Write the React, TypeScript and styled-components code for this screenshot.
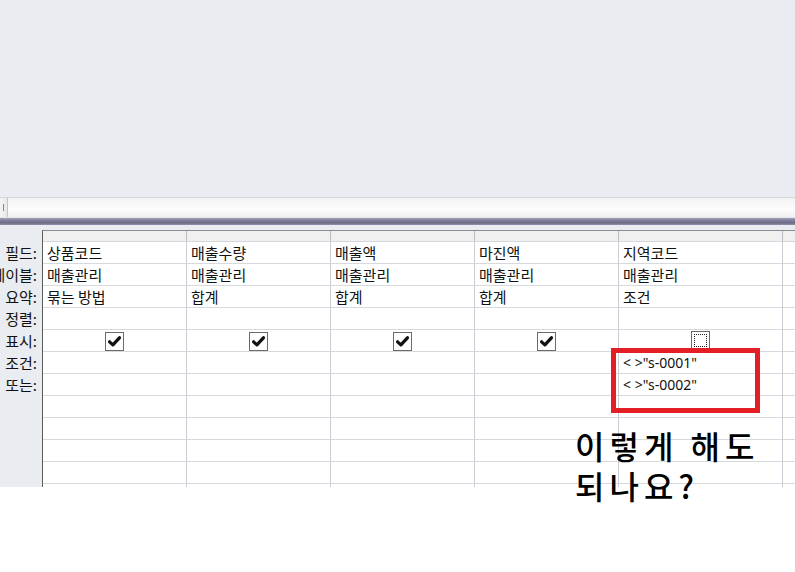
import styled, { createGlobalStyle } from 'styled-components';

const GlobalStyle = createGlobalStyle`
  html, body {
    margin: 0;
    padding: 0;
    background: #ffffff;
  }
  body {
    font-family: 'Noto Sans CJK KR', 'Noto Sans', sans-serif;
  }
`;

interface ColumnData {
  field: string;
  table: string;
  total: string;
  show: boolean;
  focused?: boolean;
  criteria?: string[];
}

const columns: Array<ColumnData> = [
  { field: '상품코드', table: '매출관리', total: '묶는 방법', show: true },
  { field: '매출수량', table: '매출관리', total: '합계', show: true },
  { field: '매출액', table: '매출관리', total: '합계', show: true },
  { field: '마진액', table: '매출관리', total: '합계', show: true },
  {
    field: '지역코드',
    table: '매출관리',
    total: '조건',
    show: false,
    focused: true,
    criteria: ['< >"s-0001"', '< >"s-0002"'],
  },
];

const rowLabels = ['필드:', '테이블:', '요약:', '정렬:', '표시:', '조건:', '또는:'];
const ROW_COUNT = 12;

function CheckMark() {
  return (
    <svg width="13" height="11" viewBox="0 0 13 11">
      <path d="M1.6 5.8 L4.9 8.9 L11.4 1.8" fill="none" stroke="#111" strokeWidth="3.2" strokeLinecap="round" strokeLinejoin="round" />
    </svg>
  );
}

const cellText = (col: ColumnData, row: number) => {
  if (row === 0) return col.field;
  if (row === 1) return col.table;
  if (row === 2) return col.total;
  if (row === 5) return col.criteria?.[0] ?? '';
  if (row === 6) return col.criteria?.[1] ?? '';
  return '';
};

export default function App() {
  return (
    <>
      <GlobalStyle />
      <Page>
        <TopPane />
        <ScrollRow>
          <ScrollButton />
        </ScrollRow>
        <Splitter />
        <DesignArea>
          <LabelColumn>
            {rowLabels.map((label) => (
              <LabelCell key={label}>{label}</LabelCell>
            ))}
          </LabelColumn>
          <Grid>
            {columns.map((col) => (
              <HeaderCell key={`h-${col.field}`} />
            ))}
            <HeaderCell $last />
            {Array.from({ length: ROW_COUNT }).map((_, row) => [
              ...columns.map((col) => (
                <DataCell key={`${row}-${col.field}`} $center={row === 4} $latin={row === 5 || row === 6}>
                  {row === 4 ? (
                    <CheckBox $focused={col.focused}>{col.show && <CheckMark />}</CheckBox>
                  ) : (
                    cellText(col, row)
                  )}
                </DataCell>
              )),
              <DataCell key={`${row}-last`} $last />,
            ])}
          </Grid>
        </DesignArea>
        <HighlightBox />
        <Question>
          이렇게 해도
          <br />
          되나요?
        </Question>
      </Page>
    </>
  );
}

const Page = styled.div`
  position: relative;
  width: 795px;
  height: 572px;
  background: #ffffff;
  overflow: hidden;
`;

const TopPane = styled.div`
  height: 197px;
  background: #e9ecf0;
  border-bottom: 1px solid #d3d6db;
`;

const ScrollRow = styled.div`
  height: 19px;
  display: flex;
  background: linear-gradient(#f3f3f3, #fcfcfc 60%, #f0f0f0);
  border-bottom: 1px solid #e4e6ea;
`;

const ScrollButton = styled.div`
  width: 7px;
  border-right: 1px solid #c4c6ca;
  background: linear-gradient(90deg, #f4f4f4, #e8e8e8);
  position: relative;
  &::after {
    content: '';
    position: absolute;
    left: 3px;
    top: 6px;
    width: 1px;
    height: 7px;
    background: #8a8a8a;
  }
`;

const Splitter = styled.div`
  height: 7px;
  background: linear-gradient(#a2a2ba, #7a7a96 40%, #6c6c88 70%, #9292ac);
`;

const DesignArea = styled.div`
  height: 257px;
  padding-top: 5px;
  display: flex;
  background: #e9ecf0;
  overflow: hidden;
`;

const LabelColumn = styled.div`
  width: 42px;
  flex: none;
  padding-top: 12px;
`;

const LabelCell = styled.div`
  height: 22px;
  display: flex;
  align-items: center;
  justify-content: flex-end;
  padding-right: 5px;
  overflow: hidden;
  white-space: nowrap;
  font-size: 15px;
  line-height: 22px;
  color: #111;
`;

const Grid = styled.div`
  flex: 1;
  display: grid;
  grid-template-columns: 144px 144px 144px 144px 164px 1fr;
  grid-auto-rows: 22px;
  grid-template-rows: 11px;
  align-content: start;
  background: #ffffff;
  border-left: 1px solid #5c5c5c;
  border-top: 1px solid #8c8c8c;
`;

const HeaderCell = styled.div<{ $last?: boolean }>`
  box-sizing: border-box;
  height: 11px;
  background: #f0f0f0;
  border-bottom: 1px solid #d4d7dc;
  border-right: ${({ $last }) => ($last ? 'none' : '1px solid #b9bcc2')};
`;

const DataCell = styled.div<{ $last?: boolean; $center?: boolean; $latin?: boolean }>`
  box-sizing: border-box;
  height: 22px;
  display: flex;
  align-items: center;
  justify-content: ${({ $center }) => ($center ? 'center' : 'flex-start')};
  padding-left: ${({ $center }) => ($center ? '0' : '4px')};
  padding-bottom: 1px;
  border-bottom: 1px solid #d6d9de;
  border-right: ${({ $last }) => ($last ? 'none' : '1px solid #c9ccd2')};
  font-family: ${({ $latin }) => ($latin ? "'Noto Sans', sans-serif" : "'Noto Sans CJK KR', sans-serif")};
  font-size: ${({ $latin }) => ($latin ? '14px' : '15px')};
  color: #111;
  white-space: nowrap;
`;

const CheckBox = styled.div<{ $focused?: boolean }>`
  box-sizing: border-box;
  width: 19px;
  height: 19px;
  margin-top: 2px;
  border: 1px solid #6a6a6a;
  background: #ffffff;
  display: flex;
  align-items: center;
  justify-content: center;
  position: relative;
  ${({ $focused }) =>
    $focused &&
    `
    margin-top: 0;
    &::after {
      content: '';
      position: absolute;
      inset: 2px;
      border: 1px dotted #222;
    }
  `}
`;

const HighlightBox = styled.div`
  position: absolute;
  left: 611px;
  top: 348px;
  width: 149px;
  height: 65px;
  box-sizing: border-box;
  border: 5px solid #e31e24;
`;

const Question = styled.div`
  position: absolute;
  left: 575px;
  top: 425px;
  font-family: 'Noto Sans CJK KR', sans-serif;
  font-size: 32px;
  font-weight: 500;
  line-height: 40px;
  letter-spacing: 5px;
  color: #000;
  white-space: nowrap;
`;
